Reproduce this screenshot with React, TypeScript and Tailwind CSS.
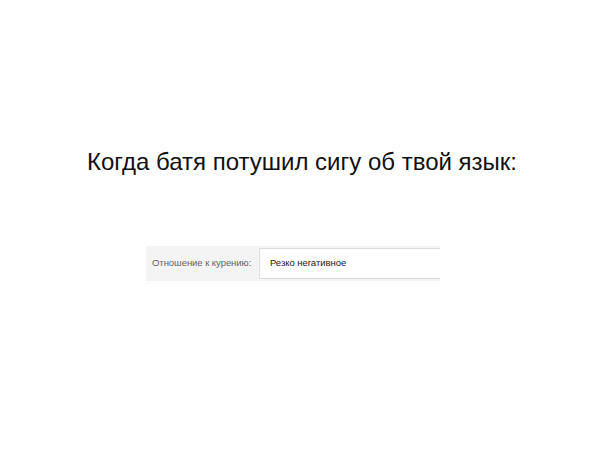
export default function App() {
  return (
    <div className="w-[604px] h-[453px] bg-white flex flex-col" style={{ fontFamily: '"Liberation Sans", Arial, sans-serif' }}>
      <h1 className="pt-[146px] text-center text-[24px] leading-[32px] text-[#111] font-normal tracking-[0px]">
        Когда батя потушил сигу об твой язык:
      </h1>
      <div className="mt-[68px] ml-[146px] w-[294px] h-[35px] bg-[#f4f4f4] flex items-center">
        <div className="w-[113px] pl-[6px] text-[9.5px] text-[#666] tracking-[-0.05px]">
          Отношение к курению:
        </div>
        <div className="flex-1 h-[31px] bg-white border border-[#dcdcdc] border-r-0 flex items-center pl-[10px] text-[9.5px] text-[#222] tracking-[-0.05px]">
          Резко негативное
        </div>
      </div>
    </div>
  );
}
